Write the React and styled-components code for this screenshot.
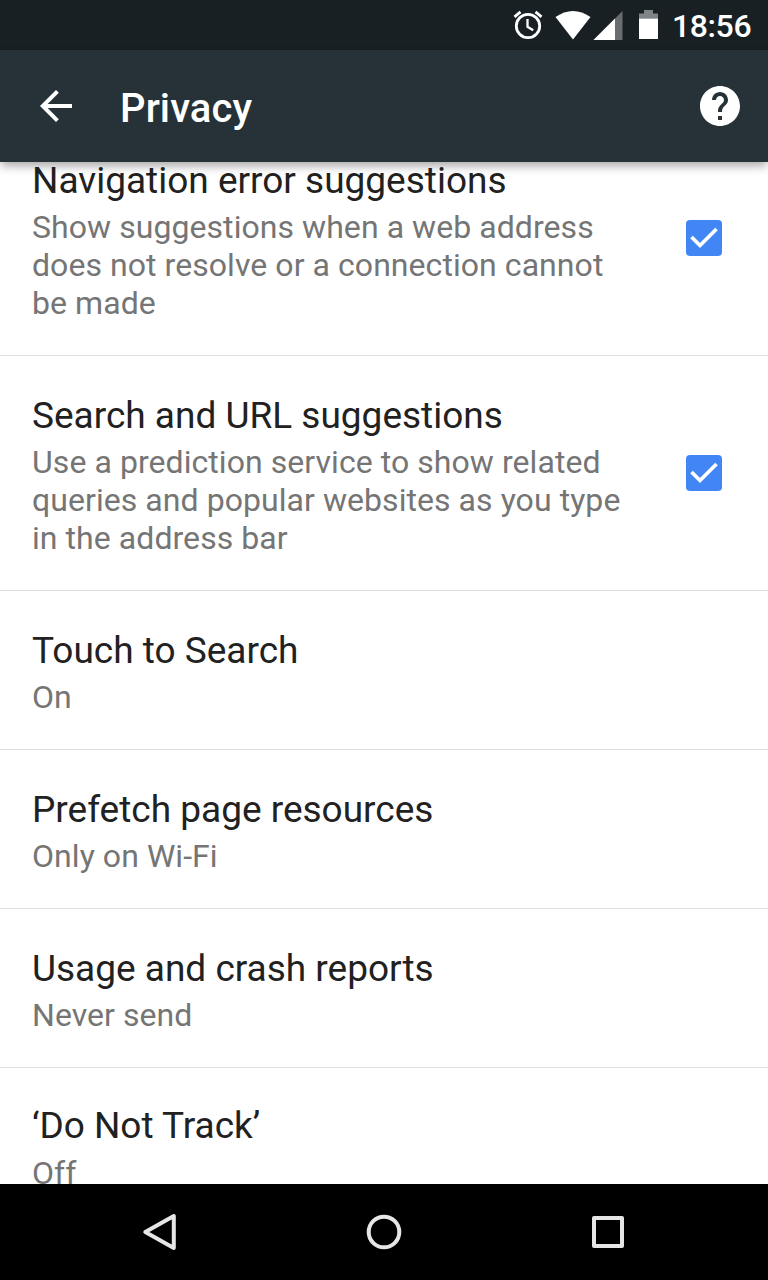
import React from "react";
import styled, { createGlobalStyle } from "styled-components";

const GlobalStyle = createGlobalStyle`
  * {
    box-sizing: border-box;
  }
  body {
    margin: 0;
    background: #fff;
    font-family: Roboto, "Liberation Sans", sans-serif;
  }
`;

const Screen = styled.div`
  display: flex;
  flex-direction: column;
  width: 768px;
  height: 1280px;
  overflow: hidden;
  background: #fff;
`;

const StatusBar = styled.div`
  display: flex;
  flex: none;
  justify-content: flex-end;
  height: 50px;
  padding-right: 16px;
  background: #192023;
  color: #fff;
`;

const StatusIcons = styled.svg`
  display: block;
  width: 150px;
  height: 50px;
`;

const Clock = styled.span`
  width: 80px;
  margin-left: 10px;
  font-size: 32px;
  font-weight: 500;
  line-height: 52px;
  letter-spacing: -0.4px;
`;

const Toolbar = styled.header`
  display: flex;
  flex: none;
  align-items: center;
  height: 112px;
  padding: 0 24px 0 32px;
  background: #263238;
  color: #fff;
  box-shadow: 0 5px 9px -1px rgba(0, 0, 0, 0.34);
  z-index: 1;
`;

const Title = styled.h1`
  flex: 1;
  margin: 5px 0 0 40px;
  font-size: 40px;
  font-weight: 500;
  line-height: 48px;
  letter-spacing: 0.1px;
`;

const IconButton = styled.button`
  display: flex;
  padding: 0;
  border: 0;
  background: none;
  color: inherit;
`;

const List = styled.main`
  flex: 1;
  min-height: 0;
  overflow: hidden;
`;

const RowText = styled.div`
  width: 600px;
`;

const RowTitle = styled.h2`
  margin: 0;
  color: #212121;
  font-size: 37px;
  font-weight: 400;
  line-height: 44px;
`;

const Summary = styled.p`
  margin: 5px 0 0;
  color: #757575;
  font-size: 32px;
  line-height: 38px;
  letter-spacing: 0.06px;
  white-space: pre-line;
`;

const Row = styled.section`
  display: flex;
  align-items: flex-start;
  justify-content: space-between;
  height: ${(props) => (props.$tall ? 235 : 159)}px;
  padding: 38px 46px 0 32px;
  border-bottom: 1px solid #dedede;

  /* list is scrolled a little way into the first row */
  &:first-child {
    margin-top: -41px;
  }

  &:last-child {
    padding-top: 36px;
  }

  &:last-child ${Summary} {
    margin-top: 6px;
  }
`;

const Checkbox = styled.span`
  display: flex;
  width: 36px;
  height: 36px;
  margin-top: 61px;
  border-radius: 4px;
  background: #4285f4;
`;

const NavBar = styled.nav`
  display: flex;
  flex: none;
  align-items: center;
  justify-content: space-between;
  height: 96px;
  padding: 0 136px;
  background: #000;
  color: #e6e6e6;
`;

const NavIcon = styled.svg`
  width: 48px;
  height: 48px;
  fill: none;
  stroke: currentColor;
  stroke-width: 4px;
  stroke-linejoin: round;
`;

const settings = [
  {
    title: "Navigation error suggestions",
    summary:
      "Show suggestions when a web address\ndoes not resolve or a connection cannot\nbe made",
    checked: true,
  },
  {
    title: "Search and URL suggestions",
    summary:
      "Use a prediction service to show related\nqueries and popular websites as you type\nin the address bar",
    checked: true,
  },
  { title: "Touch to Search", summary: "On" },
  { title: "Prefetch page resources", summary: "Only on Wi-Fi" },
  { title: "Usage and crash reports", summary: "Never send" },
  { title: "‘Do Not Track’", summary: "Off" },
];

function App() {
  return (
    <Screen>
      <GlobalStyle />
      <StatusBar>
        <StatusIcons viewBox="512 0 150 50" fill="#fff">
          <g fill="none" stroke="#fff" strokeWidth="2.8">
            <circle cx="528" cy="26" r="11.7" />
            <path d="M527.5 19v7.8l5.7 3.5" strokeWidth="2.3" />
            <path d="M514.5 16.8l6-5M541.5 16.8l-6-5" />
          </g>
          <path d="M555.5 17q17.5-12 35 0l-17.5 22.500z" />
          <path d="M622.5 11v29h-29z" opacity=".35" />
          <path d="M615 18.5v21.500h-21.500z" />
          <path d="M644 10h9v3.500h5v5h-19v-5h5z" opacity=".45" />
          <path d="M639 18.500h19v20.500h-19z" />
        </StatusIcons>
        <Clock>18:56</Clock>
      </StatusBar>
      <Toolbar>
        <IconButton aria-label="Back">
          <svg width="48" height="48" viewBox="0 0 24 24" fill="currentColor">
            <path d="M20 11H7.83l5.59-5.59L12 4l-8 8 8 8 1.41-1.41L7.83 13H20v-2z" />
          </svg>
        </IconButton>
        <Title>Privacy</Title>
        <IconButton aria-label="Help">
          <svg width="48" height="48" viewBox="0 0 24 24" fill="currentColor">
            <path d="M12 2C6.48 2 2 6.48 2 12s4.48 10 10 10 10-4.48 10-10S17.52 2 12 2zm1 17h-2v-2h2v2zm2.07-7.75l-.9.92C13.45 12.9 13 13.5 13 15h-2v-.5c0-1.1.45-2.1 1.17-2.83l1.24-1.26c.37-.36.59-.86.59-1.41 0-1.1-.9-2-2-2s-2 .9-2 2H8c0-2.21 1.79-4 4-4s4 1.79 4 4c0 .88-.36 1.68-.93 2.25z" />
          </svg>
        </IconButton>
      </Toolbar>
      <List>
        {settings.map((item) => (
          <Row key={item.title} $tall={item.checked}>
            <RowText>
              <RowTitle>{item.title}</RowTitle>
              <Summary>{item.summary}</Summary>
            </RowText>
            {item.checked ? (
              <Checkbox role="checkbox" aria-checked="true">
                <svg width="36" height="36" fill="none" stroke="#fff" strokeWidth="3.7">
                  <path d="M5.5 17l8.500 8.500L30.500 9" />
                </svg>
              </Checkbox>
            ) : null}
          </Row>
        ))}
      </List>
      <NavBar>
        <NavIcon>
          <path d="M9.500 24L38 8v32z" transform="translate(-.2 0)" />
        </NavIcon>
        <NavIcon>
          <circle cx="24" cy="24" r="15.3" />
        </NavIcon>
        <NavIcon>
          <rect x="10" y="10" width="28" height="28" />
        </NavIcon>
      </NavBar>
    </Screen>
  );
}

export default App;
